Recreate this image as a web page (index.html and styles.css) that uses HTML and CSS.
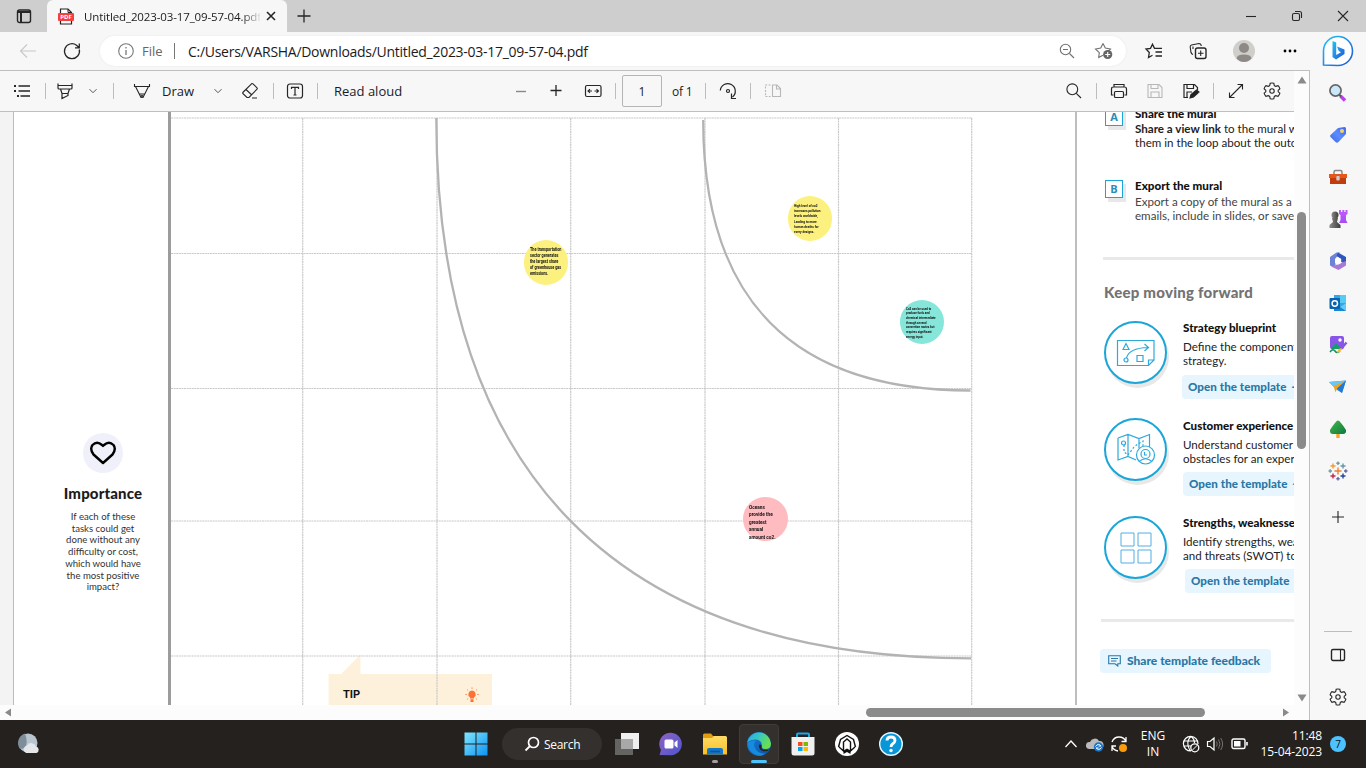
FILE: index.html
```html
<!DOCTYPE html>
<html lang="en">
<head>
<meta charset="utf-8">
<title>Untitled_2023-03-17_09-57-04.pdf</title>
<link rel="stylesheet" href="styles.css">
</head>
<body>
<svg width="0" height="0" class="defs">
  <defs>
    <linearGradient id="bing" x1="0" y1="0" x2="1" y2="1"><stop offset="0" stop-color="#25c1f5"/><stop offset="1" stop-color="#2257d6"/></linearGradient>
    <linearGradient id="tag" x1="1" y1="0" x2="0" y2="1"><stop offset="0" stop-color="#4a63e8"/><stop offset=".5" stop-color="#5a8cff"/><stop offset="1" stop-color="#4665e0"/></linearGradient>
    <linearGradient id="violet" x1="0" y1="0" x2="0" y2="1"><stop offset="0" stop-color="#c05cff"/><stop offset="1" stop-color="#a64bf4"/></linearGradient>
    <linearGradient id="pawn" x1="0" y1="0" x2="1" y2="0"><stop offset="0" stop-color="#8a8a8a"/><stop offset="1" stop-color="#3c3c3c"/></linearGradient>
    <linearGradient id="win" x1="0" y1="0" x2="1" y2="1"><stop offset="0" stop-color="#7fe6fd"/><stop offset="1" stop-color="#0d92f4"/></linearGradient>
    <linearGradient id="folder" x1="0" y1="0" x2="0" y2="1"><stop offset="0" stop-color="#ffdc68"/><stop offset="1" stop-color="#fbbe20"/></linearGradient>
    <linearGradient id="chat" x1="0" y1="0" x2="1" y2="1"><stop offset="0" stop-color="#9163c0"/><stop offset="1" stop-color="#4a55cf"/></linearGradient>
    <linearGradient id="edgeTop" x1="0" y1="0" x2="1" y2=".4"><stop offset="0" stop-color="#2ba7e4"/><stop offset=".5" stop-color="#38c7c3"/><stop offset="1" stop-color="#69e04b"/></linearGradient>
    <linearGradient id="edgeLow" x1="0" y1="0" x2="1" y2="1"><stop offset="0" stop-color="#1784dc"/><stop offset="1" stop-color="#0c4fa0"/></linearGradient>
    <linearGradient id="tree" x1="0" y1="0" x2="1" y2="1"><stop offset="0" stop-color="#45b649"/><stop offset="1" stop-color="#0d7a3e"/></linearGradient>
    <symbol id="gear" viewBox="0 0 20 20"><path d="M8.2 2.2Q10 1.7 11.8 2.2L12.3 4.6 13.7 5.4 16.1 4.7Q17.4 6 17.9 7.9L16.2 9.2V10.8L17.9 12.2Q17.4 14 16.1 15.3L13.7 14.6 12.3 15.4 11.8 17.8Q10 18.3 8.2 17.8L7.7 15.4 6.3 14.6 3.9 15.3Q2.6 14 2.1 12.2L3.8 10.8V9.2L2.1 7.9Q2.6 6 3.9 4.7L6.3 5.4 7.7 4.6Z"/><circle cx="10" cy="10" r="2.2"/></symbol>
    <symbol id="chev" viewBox="0 0 12 12"><path d="M2.5 4.2 6 7.7 9.5 4.2"/></symbol>
    <symbol id="lens" viewBox="0 0 20 20"><circle cx="8.3" cy="8.3" r="5.4"/><path d="M12.3 12.3 17 17"/></symbol>
  </defs>
</svg>

<header class="tabstrip">
  <svg class="line tab-actions" width="16" height="16" viewBox="0 0 16 16"><rect x="1.5" y="2" width="13" height="12.5" rx="2" stroke-width="1.4"/><path d="M1.5 4H14.5M5 5V14" stroke-width="2"/></svg>
  <div class="tab">
    <svg width="16" height="17" viewBox="0 0 16 17"><path d="M2.5 1H10L13.5 4.500V16H2.500Z" fill="#fff" stroke="#222" stroke-width="1.2"/><path d="M10 1V4.500H13.500" fill="none" stroke="#222"/><rect x="0" y="5" width="16" height="8" rx="1" fill="#f5403c"/><text x="8" y="11.200" class="pdf-mark">PDF</text></svg>
    <span class="tab-title">Untitled_2023-03-17_09-57-04.pdf</span>
    <svg class="line" width="12" height="12" viewBox="0 0 12 12"><path d="M2 2 10 10M10 2 2 10" stroke-width="1.6"/></svg>
  </div>
  <svg class="line new-tab" width="16" height="16" viewBox="0 0 16 16"><path d="M8 1.500V14.500M1.500 8H14.500" stroke-width="1.300"/></svg>
  <div class="window-buttons">
    <svg class="line" width="12" height="12" viewBox="0 0 12 12"><path d="M1 6.500H11"/></svg>
    <svg class="line" width="12" height="12" viewBox="0 0 12 12"><rect x="1.500" y="3.500" width="7" height="7" rx="1.500"/><path d="M4 1.500H8.500Q10.500 1.500 10.500 3.500V8"/></svg>
    <svg class="line" width="12" height="12" viewBox="0 0 12 12"><path d="M1 1 11 11M11 1 1 11"/></svg>
  </div>
</header>

<div class="workspace">
  <main class="browser">
    <nav class="address-row">
      <svg class="line back" width="32" height="32" viewBox="0 0 32 32"><path d="M24 16H8.500M15 9.500 8.500 16 15 22.500"/></svg>
      <svg class="line ml-12" width="32" height="32" viewBox="0 0 32 32"><path d="M23.300 14.500A7.500 7.500 0 1 1 20.500 10.200L23 12.500M23.300 8.500V12.800H19" stroke-width="1.300"/></svg>
      <div class="address ml-12">
        <svg class="line info" width="16" height="16" viewBox="0 0 16 16"><circle cx="8" cy="8" r="7.300"/><path d="M8 7V12M8 4V5.500" stroke-width="1.300"/></svg>
        <span class="scheme">File</span><i class="address-sep"></i>
        <span class="url">C:/Users/VARSHA/Downloads/Untitled_2023-03-17_09-57-04.pdf</span>
        <svg class="line grey" width="16" height="16" viewBox="0 0 16 16"><circle cx="6.500" cy="6.500" r="5.200"/><path d="M4 6.500H9M10.500 10.500 15 15"/></svg>
        <svg class="line grey fav-add" width="20" height="18" viewBox="0 0 20 18"><path d="M9 1.500 11.300 6 16.500 7 13 10.500M9 13.300 4.700 15.500 5.300 10.600 1.500 7 6.700 6 9 1.500"/><circle cx="13.700" cy="12.500" r="4.600" fill="#666" stroke="none"/><path d="M13.700 10V15M11.200 12.500H16.200" stroke="#fff"/></svg>
      </div>
      <svg class="line ml-12" width="32" height="32" viewBox="0 0 32 32"><path d="M16 12.500 14.500 9.200 12.500 13.400 8 14 11.300 17.500 10.500 22.500 14.500 20.300M14.500 9.200 16.500 13.300H24M17.500 17H24M17.500 21H24" stroke-width="1.300"/></svg>
      <svg class="line ml-12" width="32" height="32" viewBox="0 0 32 32"><path d="M11 19.500Q9.500 19 9 17.500L8.200 12Q8 10.500 9.500 10L17 8.500Q19 8.500 19.300 11"/><path d="M11 14V11.500"/><rect x="13.500" y="13" width="10.500" height="10.500" rx="2" stroke-width="1.400"/><path d="M18.700 15.500V21M16 18.300H21.500"/></svg>
      <svg class="ml-14" width="32" height="32" viewBox="0 0 32 32"><circle cx="16" cy="16" r="11" fill="#d0ceca"/><circle cx="16" cy="13" r="5" fill="#8d8986"/><path d="M8.500 23.500Q9 19.500 16 19.500T23.500 23.500Q20 27 16 27T8.500 23.500" fill="#8d8986"/></svg>
      <svg class="ml-14" width="32" height="32" viewBox="0 0 32 32"><circle cx="11" cy="16" r="1.400"/><circle cx="16" cy="16" r="1.400"/><circle cx="21" cy="16" r="1.400"/></svg>
    </nav>

    <div class="reader">
      <div class="reader-main">
        <div class="pdfbar">
          <svg class="line" width="20" height="20" viewBox="0 0 20 20"><path d="M6.500 5H18M6.500 10H18M8.500 15H18" stroke-width="1.300"/><path d="M2 5H4M2 10H4M5 15H7" stroke-width="2"/></svg>
          <i class="sep ml-13"></i>
          <svg class="line ml-9" width="20" height="20" viewBox="0 0 20 20"><path d="M3 2.500V7Q3 8 4 8H16Q17 8 17 7V2.500M3.500 4.500H16.500M5.500 8 7 12.500H13L14.500 8M7 12.500V17.500L13 14.500V12.500" stroke-width="1.200"/></svg>
          <svg class="line chev ml-12" width="12" height="12"><use href="#chev"/></svg>
          <i class="sep ml-14"></i>
          <svg class="line ml-18" width="20" height="20" viewBox="0 0 20 20"><path d="M2.500 3V5.500H17.500V3M3.500 5.500 9 16.500H11L16.500 5.500M7.500 13H12.500" stroke-width="1.100"/><path d="M8.500 14H11.500L10.500 17H9.500Z" fill="#444" stroke="none"/></svg>
          <span class="draw ml-10">Draw</span>
          <svg class="line chev ml-10" width="12" height="12"><use href="#chev"/></svg>
          <svg class="line ml-16" width="20" height="20" viewBox="0 0 20 20"><path d="M2.800 11.500 11.500 2.800Q12.300 2.200 13 2.800L17 6.800Q17.600 7.500 17 8.200L9 16.500H7L2.800 12.500ZM6 8.500 11.800 14M12 17H17" stroke-width="1.100"/></svg>
          <i class="sep ml-13"></i>
          <svg class="line ml-11" width="20" height="20" viewBox="0 0 20 20"><rect x="2.500" y="3" width="15" height="14" rx="2.500" stroke-width="1.200"/><path d="M6.500 8V6.300H13.500V8M10 6.300V14M8.500 14H11.500" stroke-width="1.200"/></svg>
          <i class="sep ml-12"></i>
          <span class="read ml-16">Read aloud</span>
          <svg class="line minus" width="20" height="20" viewBox="0 0 20 20"><path d="M5 10.500H15" stroke-width="1.400" stroke="#888"/></svg>
          <svg class="line ml-15" width="20" height="20" viewBox="0 0 20 20"><path d="M4.500 9.500H15.500M10 4V15" stroke-width="1.300"/></svg>
          <svg class="line ml-17" width="20" height="20" viewBox="0 0 20 20"><rect x="2.500" y="4.500" width="15.500" height="11" rx="1.500" stroke-width="1.200"/><path d="M5 10H9M11.500 10H15.500M7 8.200 5 10 7 11.800M13.500 8.200 15.500 10 13.500 11.800"/></svg>
          <i class="sep ml-12"></i>
          <span class="page-input">1</span>
          <span class="of ml-10">of 1</span>
          <i class="sep ml-11"></i>
          <svg class="line ml-12" width="20" height="20" viewBox="0 0 20 20"><path d="M2.300 9.500A7.500 7.500 0 1 1 14.500 16M13.500 12.500V17.500H18" stroke-width="1.200"/><circle cx="10" cy="10" r="1.500" stroke-width="1.200"/></svg>
          <i class="sep ml-12"></i>
          <svg class="line pale ml-12" width="20" height="20" viewBox="0 0 20 20"><path d="M9.500 4H14L17.500 7.500V15.500H9.500ZM13.500 4V8H17.500"/><path d="M7.500 4H2.500V15.500H7.500" stroke-dasharray="2 1.300"/></svg>
          <svg class="line find" width="20" height="20"><use href="#lens"/></svg>
          <i class="sep ml-12"></i>
          <svg class="line ml-12" width="20" height="20" viewBox="0 0 20 20"><path d="M5 6V3.500H15V6M4.500 14H2.500V8Q2.500 6 4.500 6H15.500Q17.500 6 17.500 8V14H15.500" stroke-width="1.200"/><rect x="5.500" y="10.500" width="9" height="6" rx="1" stroke-width="1.200"/></svg>
          <svg class="line pale ml-16" width="20" height="20" viewBox="0 0 20 20"><path d="M3 3.500H14L17 6.500V16.500H3ZM6 3.500V7.500H13V3.500M6 16.500V11H14V16.500"/></svg>
          <svg class="line ml-16" width="20" height="20" viewBox="0 0 20 20"><path d="M7 16.500H3V3.500H13.500L16.500 6.500V9M6 3.500V7.500H12.500V3.500M6 16.500V11H11" stroke-width="1.200"/><path d="M9 17 10 13.500 15.500 9 18 11 12.500 16Z" fill="#222"/></svg>
          <i class="sep ml-12"></i>
          <svg class="line ml-12" width="20" height="20" viewBox="0 0 20 20"><path d="M3.500 16.500 16.500 3.500M11.500 3.500H16.500V8.500M3.500 11.500V16.500H8.500"/></svg>
          <svg class="line ml-16" width="20" height="20"><use href="#gear"/></svg>
        </div>

        <div class="viewport">
          <section class="importance">
            <div class="heart"><svg width="28" height="26" viewBox="0 0 28 26"><path d="M14 23 4.500 14.500Q.5 9 3.500 5 8 .5 13 5L14 6 15 5Q20 .5 24.500 5 27.500 9 23.500 14.500Z" fill="none" stroke="#000" stroke-width="2.400" stroke-linejoin="round"/></svg></div>
            <h2>Importance</h2>
            <p>If each of these<br>tasks could get<br>done without any<br>difficulty or cost,<br>which would have<br>the most positive<br>impact?</p>
          </section>
          <section class="board">
            <svg class="board-lines" width="904" height="593" viewBox="171 112 904 593">
              <path d="M328.500 674H492V705H328.500ZM340.500 674.500 360.500 654.500V674.500Z" fill="#fdf1db"/>
              <g class="dashes"><path d="M171 118H972M171 253.500H972M171 388.500H972M171 521H972M171 656H972M302.700 118V705M437 118V705M570.700 118V705M705 118V705M838.500 118V705M971.700 118V705"/></g>
              <g class="arcs"><path d="M436.300 118C436.300 472 616 658.300 971 658.300M703.200 120C703.200 299 792 390.500 970.500 390.500"/></g>
            </svg>
            <div class="note yellow n1"><p>The transportation<br>sector generates<br>the largest share<br>of greenhouse gas<br>emissions.</p></div>
            <div class="note yellow n2"><p>High level of co2<br>increases pollution<br>levels worldwide,<br>Leading to more<br>human deaths for<br>every designs.</p></div>
            <div class="note teal n3"><p>Co2 can be used to<br>produce fuels and<br>chemical intermediate<br>through several<br>convertion routes but<br>requires significant<br>energy input.</p></div>
            <div class="note pink n4"><p>Oceans<br>provide the<br>greatest<br>annual<br>amount co2.</p></div>
            <div class="tip"><b>TIP</b><svg width="14" height="16" viewBox="0 0 14 16"><path d="M7 3.500A3.700 3.700 0 0 1 9 10.300V11.500H5V10.300A3.700 3.700 0 0 1 7 3.500M5.500 12.300H8.500V15H5.500Z" fill="#ff7033"/><path d="M7 .3V2M2 2.500 3.200 3.500M12 2.500 10.800 3.500M.2 7.500H2M12 7.500H13.800M2 12.500 3.200 11.500M12 12.500 10.800 11.500" stroke="#ff9a66"/></svg></div>
          </section>
          <aside class="guide">
            <div class="step first"><i class="letter">A</i><div><h3>Share the mural</h3><p class="dark"><b>Share a view link</b> to the mural with<br>them in the loop about the outcomes</p></div></div>
            <div class="step"><i class="letter">B</i><div><h3>Export the mural</h3><p>Export a copy of the mural as a PDF<br>emails, include in slides, or save it</p></div></div>
            <hr>
            <h2>Keep moving forward</h2>
            <div class="template t1"><span class="disc"><svg width="40" height="30" viewBox="0 0 40 30"><path d="M1.500 2.500H38V22L32.500 27.500H1.500ZM32.500 27.500V22H38M7 11.500 10 5.500 13 11.500ZM10.500 20Q13 10 32 9.500M28.500 6 32.500 9.500 28.500 13M21 17.500H27V23.500H21Z"/><circle cx="10" cy="22" r="2"/></svg></span>
              <div><h3>Strategy blueprint</h3><p>Define the components of a<br>strategy.</p><a>Open the template<span>→</span></a></div></div>
            <div class="template t2"><span class="disc"><svg width="40" height="34" viewBox="0 0 40 34"><path d="M2 6 12 2.500 23 6.500 33.500 2.500V16M2 6V28L12 24.500 20 28M12 2.500V24.500M23 6.500V16"/><path d="M8 13V20L12 23 18 15 22 12 27 9V15" stroke-dasharray="2 2"/><circle cx="7.500" cy="11" r="2"/><circle cx="29.500" cy="23" r="9" fill="#fff"/><circle cx="29.500" cy="22" r="4.500"/><path d="M23 29.500Q29.500 24 36 29.500M28.500 20V23H31"/></svg></span>
              <div><h3>Customer experience map</h3><p>Understand customer needs and<br>obstacles for an experience</p><a>Open the template<span>→</span></a></div></div>
            <div class="template t3"><span class="disc"><svg class="swot" width="32" height="32" viewBox="0 0 32 32"><path d="M1 1H14V14H1ZM18 1H31V14H18ZM1 18H14V31H1ZM18 18H31V31H18Z"/></svg></span>
              <div><h3>Strengths, weaknesses</h3><p>Identify strengths, weaknesses<br>and threats (SWOT) to develop</p><a>Open the template<span>→</span></a></div></div>
            <hr class="last">
            <a class="feedback"><svg width="13" height="12" viewBox="0 0 13 12"><path d="M.7.700H12.300V8.800H9.800V11L7 8.800H.700ZM3 3.500H10M3 6H8.500" fill="none" stroke="#2a78a4" stroke-width="1.100"/></svg>Share template feedback</a>
          </aside>
        </div>
        <div class="hscroll"><svg width="8" height="9" viewBox="0 0 8 9"><path d="M7 .5V8.500L1 4.500Z"/></svg><i></i><svg width="8" height="9" viewBox="0 0 8 9"><path d="M1 .5V8.500L7 4.500Z"/></svg></div>
      </div>
      <div class="vscroll"><svg width="10" height="8" viewBox="0 0 10 8"><path d="M5 .5 9.500 7.500H.5Z"/></svg><i></i><svg class="down" width="10" height="8" viewBox="0 0 10 8"><path d="M.5.500H9.500L5 7.500Z"/></svg></div>
    </div>
  </main>

  <aside class="sidebar">
    <svg class="bing" width="32" height="34" viewBox="0 0 32 34"><path d="M1.500 31V17A14.500 14.500 0 1 1 16 31.500Z" fill="#fff" stroke="url(#bing)" stroke-width="1.600"/><path d="M10.500 7 14.200 8.500V21L19 18.300 16.800 17 15 12.500 22.500 15.500V20L14 25.500 10.500 23Z" fill="url(#bing)"/></svg>
    <span><svg width="20" height="20" viewBox="0 0 20 20"><path d="M12.500 13 17 17.500" stroke="#bf3df0" stroke-width="3.400"/><path d="M10.500 11 13 13.500" stroke="#555" stroke-width="2"/><circle cx="7.500" cy="7.500" r="5.600" fill="#c9e9fb" stroke="#666" stroke-width="1.700"/></svg></span>
    <span><svg width="20" height="20" viewBox="0 0 20 20"><path d="M10 3 16.500 2Q18 2 18 3.500V9L10.500 17Q9 18.500 7.500 17L2.500 12Q1.500 11 2.500 10Z" fill="url(#tag)"/><circle cx="14" cy="6" r="2" fill="#f6d65a"/></svg></span>
    <span><svg width="20" height="20" viewBox="0 0 20 20"><path d="M6 7V5Q6 3.500 7.500 3.500H12.500Q14 3.500 14 5V7" fill="none" stroke="#888" stroke-width="1.500"/><path d="M1 7H19V11H1Z" fill="#e6571b"/><path d="M2 11H18V17H2Z" fill="#c23c0c"/><rect x="8.300" y="9" width="3.400" height="4.500" rx="1" fill="#ccc"/></svg></span>
    <span><svg width="20" height="20" viewBox="0 0 20 20"><path d="M11 1H13V3H14.300V1H16.300V3H17.500V1H19.500V5L18 6V11L19.500 14H11L12.500 11V6L11 5Z" fill="url(#violet)"/><circle cx="7" cy="6" r="3.500" fill="url(#pawn)"/><path d="M4 9H10L9 13 12.500 16V19H1.500V16L5 13Z" fill="url(#pawn)"/></svg></span>
    <span><svg width="20" height="20" viewBox="0 0 20 20"><path d="M2 6 8.500 1.500H12L7.500 7.500V14L5.500 16 2 14.500Z" fill="#6c84d6"/><path d="M10 1.500 18 6V12.500L13 11V8L8.500 5Z" fill="#3055bd"/><path d="M18 10V14.500L10.500 19 3 15.500 8 14 13 12Z" fill="#a77bd5"/><path d="M7 8 10 6.200 13.200 8V12L10 13.800 7 12Z" fill="#fff"/></svg></span>
    <span><svg width="20" height="20" viewBox="0 0 20 20"><path d="M6 2H18V18H6Z" fill="#35a7e6"/><path d="M12 2H18V10H12Z" fill="#58cbf5"/><path d="M6 11 12 14 18 10V18H6Z" fill="#1687d4"/><path d="M18 10 12 14 18 18Z" fill="#64ccf4"/><rect x="1.500" y="5" width="10.500" height="11" rx="1" fill="#0864b1"/><circle cx="6.800" cy="10.500" r="2.700" fill="none" stroke="#fff" stroke-width="1.500"/></svg></span>
    <span><svg width="20" height="20" viewBox="0 0 20 20"><rect x="2" y="1" width="14" height="13" rx="2" fill="#8955e8"/><path d="M3 13 8 8 14 14H3Z" fill="#179d69"/><circle cx="12" cy="5" r="1.700" fill="#fff"/><path d="M2 17Q5 13 7 16T12 16" fill="none" stroke="#128c60" stroke-width="1.500"/><path d="M18.500 7.500 13 14" stroke="#8955e8" stroke-width="2.400"/><path d="M14 13 12 17 9 18 10.500 14Z" fill="#f7ba28"/></svg></span>
    <span><svg width="20" height="20" viewBox="0 0 20 20"><path d="M1 5 18 3.500 14 16 9 13Z" fill="#2f9bee"/><path d="M1 5 18 3.500 7 10.500Z" fill="#69c6f7"/><path d="M5.500 9 18 4 9 11.500 7.500 15.500Z" fill="#eda526"/><path d="M9 11.500 14 16 18 3.500Z" fill="#2378d3"/></svg></span>
    <span><svg width="20" height="20" viewBox="0 0 20 20"><path d="M8.300 13H11.700V19H8.300Z" fill="#f6a526"/><path d="M10 1.500Q12 1.500 18 11 18.500 15 15 15H5Q1.500 15 2 11 8 1.500 10 1.500" fill="url(#tree)"/></svg></span>
    <span><svg width="20" height="20" viewBox="0 0 20 20" fill="none" stroke-width="1.400"><path d="M10 6.500V13.500M6.500 10H13.500" stroke="#eb7e34"/><path d="M5 2.500V7.500M2.500 5H7.500" stroke="#ee9b39"/><path d="M15 2.500V7.500M12.500 5H17.500" stroke="#5f9aa5"/><path d="M5 12.500V17.500M2.500 15H7.500" stroke="#c7254b"/><path d="M15 12.500V17.500M12.500 15H17.500" stroke="#24478e"/><path d="M10 .5V4M8.300 2.200H11.700M2.200 8.300V11.700M.5 10H4" stroke="#7199a6"/><path d="M10 16V19.500M8.300 17.800H11.700M17.800 8.300V11.700M16 10H19.500" stroke="#6567a9"/></svg></span>
    <span class="plus"><svg class="line" width="14" height="14" viewBox="0 0 14 14"><path d="M7 1V13M1 7H13"/></svg></span>
    <i></i>
    <span class="panel"><svg class="line" width="16" height="16" viewBox="0 0 16 16"><rect x="1.500" y="2.500" width="13" height="11" rx="1.500" stroke-width="1.400"/><path d="M10.500 2.500V13.500"/></svg></span>
    <span class="sidegear"><svg class="line" width="20" height="20"><use href="#gear"/></svg></span>
  </aside>
</div>

<footer class="taskbar">
  <div class="weather"><svg width="24" height="24" viewBox="0 0 24 24"><circle cx="11" cy="11" r="9.500" fill="#b8c4ce"/><path d="M8 1.500A10 10 0 0 0 3 17Q13 16 8 1.500" fill="#7d8d99"/><path d="M9 21A4 4 0 0 1 10 13.500 5 5 0 0 1 19 14.500 3.400 3.400 0 0 1 19.500 21Z" fill="#e4e7e9"/></svg></div>
  <div class="apps">
    <span><svg width="24" height="24" viewBox="0 0 24 24"><path d="M.5.500H11.500V11.500H.5ZM12.500.500H23.500V11.500H12.500ZM.5 12.500H11.500V23.500H.5ZM12.500 12.500H23.500V23.500H12.500Z" fill="url(#win)"/></svg></span>
    <div class="search"><svg width="16" height="16" viewBox="0 0 16 16"><circle cx="9.500" cy="6.500" r="5" fill="none" stroke="#fff" stroke-width="1.700"/><path d="M6 10 1.500 14.500" stroke="#fff" stroke-width="1.800"/></svg>Search</div>
    <span class="view"><svg width="24" height="24" viewBox="0 0 24 24"><rect x="6" y="1" width="18" height="16" fill="#efefef"/><rect x="0" y="7" width="18" height="16" fill="#707070" opacity=".85"/><rect x="6" y="7" width="12" height="10" fill="#a9a9a9"/></svg></span>
    <span><svg width="24" height="24" viewBox="0 0 24 24"><path d="M.5 23 2 18A11.300 11.300 0 1 1 12 23.300Z" fill="url(#chat)"/><rect x="5.500" y="7.500" width="9" height="9" rx="1.500" fill="#fff"/><path d="M15.500 10.500 18.500 8V16L15.500 13.500Z" fill="#fff"/></svg></span>
    <span class="folder"><svg width="24" height="24" viewBox="0 0 24 24"><path d="M0 3Q0 1.500 1.500 1.500H8L10 4H22V8H0Z" fill="#e39c10"/><path d="M0 6H9L11 4H22.500Q24 4 24 5.500V22.500H0Z" fill="url(#folder)"/><path d="M4 22.500V18Q4 16 6 16H18Q20 16 20 18V22.500Z" fill="#1376c9"/><path d="M7 19.500H17" stroke="#0a569c" stroke-width="1.500"/></svg><i></i></span>
    <span class="edge"><svg width="24" height="24" viewBox="0 0 24 24"><circle cx="12" cy="12" r="12" fill="url(#edgeLow)"/><path d="M.3 10A12 12 0 0 1 24 11.500Q24 17 18.500 17 14 17 14.800 13.500 15 8.500 9.500 7.500 4 7 .3 10" fill="url(#edgeTop)"/><path d="M9 8.500Q5.500 12 8.500 17T18.500 21.500Q13 25.500 7 22T1 11Q4 8 9 8.500" fill="#178be0"/><path d="M14.800 13.500Q13 18 18.500 18 22 18 23.200 16.500 20.500 20 16.500 19.200 12 18 12 14 12 11.500 14.800 13.500" fill="#25211f"/></svg><i></i></span>
    <span class="store"><svg width="24" height="24" viewBox="0 0 24 24"><path d="M6 6V2.500Q6 1.500 7 1.500H17Q18 1.500 18 2.500V6" fill="none" stroke="#1aa7e8" stroke-width="2"/><path d="M.5 5H23.500V21Q23.500 23.500 21 23.500H3Q.5 23.500 .5 21Z" fill="#f0f0f0"/><path d="M7 10H11.500V14H7Z" fill="#f25022"/><path d="M12.500 10H17V14H12.500Z" fill="#7fba00"/><path d="M7 15H11.500V19H7Z" fill="#00a4ef"/><path d="M12.500 15H17V19H12.500Z" fill="#ffb900"/></svg></span>
    <span class="mcafee"><svg width="24" height="24" viewBox="0 0 24 24"><circle cx="12" cy="12" r="12" fill="#fff"/><path d="M3.500 15 5.500 7.500 12 3.500 18.500 7.500 20.500 15M4 15 8.500 19V10L12 7 15.500 10V19L20 15" fill="none" stroke="#111" stroke-width="1.400"/><path d="M8.500 22V18.500L12 16.500 15.500 18.500V22L12 20Z" fill="#111"/></svg></span>
    <span><svg width="24" height="24" viewBox="0 0 24 24"><circle cx="12" cy="12" r="11.300" fill="#0796d8" stroke="#e8f7ff" stroke-width="1.400"/><path d="M8 8.500Q8 5 12 5T16 8.500Q16 10.500 13.500 12 12 13 12 15" fill="none" stroke="#fff" stroke-width="2.800"/><circle cx="12" cy="18.500" r="1.700" fill="#fff"/></svg></span>
  </div>
  <div class="tray">
    <svg class="light" width="14" height="14" viewBox="0 0 14 14"><path d="M1.500 10 7 4 12.500 10" stroke-width="1.300"/></svg>
    <svg class="cloud" width="18" height="18" viewBox="0 0 18 18"><path d="M3 14A3.500 3.500 0 0 1 4 7 5 5 0 0 1 13 6 4 4 0 0 1 14 14Z" fill="#bbb"/><circle cx="12.500" cy="12" r="4.700" fill="#1976c8"/><path d="M9.500 11.500Q12.500 7.500 15 11H12.500M15.500 12.500Q13 16 10 13H12.500" fill="none" stroke="#fff"/></svg>
    <svg class="light sync" width="18" height="18" viewBox="0 0 18 18"><path d="M2 7Q4 2 9 2T16 6.500M16 2V6.500H11.500M2 16V11H6M2 11Q3 15 8 16" stroke-width="1.300"/><circle cx="13" cy="13" r="4" fill="#f99b0c" stroke="none"/></svg>
    <span class="lang">ENG<br>IN</span>
    <svg class="light globe" width="18" height="18" viewBox="0 0 18 18"><path d="M9 16A7.300 7.300 0 1 1 16 9M2 6H16M1.500 11H9M9 1.500Q5 5 6 10T9 16M9 1.500Q12.500 4 12.500 8" stroke-width="1.200"/><circle cx="12.800" cy="12.800" r="4" stroke-width="1.300"/><path d="M10 15.500 15.500 10"/></svg>
    <svg class="light sound" width="18" height="18" viewBox="0 0 18 18"><path d="M1.500 6.500H4L8 3V15L4 11.500H1.500Z" stroke-width="1.200"/><g stroke="#77716e"><path d="M10.500 6.500Q12 9 10.500 11.500M12.500 4.500Q15.500 9 12.500 13.500M14.700 3Q18.500 9 14.700 15"/></g></svg>
    <svg class="light battery" width="18" height="12" viewBox="0 0 18 12"><rect x="1" y="1" width="13" height="9.500" rx="1.500" stroke-width="1.400"/><rect x="3" y="3" width="6.500" height="5.500" fill="#fff" stroke="none"/><path d="M16 4V7.500" stroke-width="1.600"/></svg>
    <span class="clock">11:48<br>15-04-2023</span>
    <b>7</b>
  </div>
</footer>
</body>
</html>
```

FILE: styles.css
```css
* { box-sizing: border-box; }
body { margin: 0; width: 1366px; height: 768px; overflow: hidden; display: flex; flex-direction: column; background: #f7f7f7; color: #1b1b1b; font-family: "Open Sans", "Noto Sans", sans-serif; }
svg { display: block; flex: none; }
.defs { position: absolute; }
h2, h3, p { margin: 0; }
i { font-style: normal; }
.line { fill: none; stroke: #262626; stroke-width: 1.1; }
.grey { stroke: #707070; }
.pale { stroke: #b8b8b8; }
.chev { stroke: #555; stroke-width: 1; }
.ml-9 { margin-left: 9px; }
.ml-10 { margin-left: 10px; }
.ml-11 { margin-left: 11px; }
.ml-12 { margin-left: 12px; }
.ml-13 { margin-left: 13px; }
.ml-14 { margin-left: 14px; }
.ml-15 { margin-left: 15px; }
.ml-16 { margin-left: 16px; }
.ml-17 { margin-left: 17px; }
.ml-18 { margin-left: 18px; }

/* Tab strip */
.tabstrip { height: 32px; flex: none; display: flex; align-items: center; background: #cecece; }
.tab-actions { margin-left: 16px; }
.tab { margin-left: 15px; width: 240px; height: 32px; border-radius: 6px 6px 0 0; background: #f7f7f7; display: flex; align-items: center; padding-left: 11px; }
.pdf-mark { font: bold 6px "Open Sans", sans-serif; fill: #fff; text-anchor: middle; }
.tab-title { margin-left: 10px; width: 176px; margin-right: 5px; overflow: hidden; white-space: nowrap; font-size: 11.5px; letter-spacing: -.12px; -webkit-mask-image: linear-gradient(90deg, #000 158px, transparent 178px); }
.new-tab { margin-left: 9px; }
.window-buttons { margin-left: auto; display: flex; gap: 34px; padding-right: 17px; }

.workspace { flex: 1; min-height: 0; display: flex; }
.browser { width: 1310px; flex: none; display: flex; flex-direction: column; }

/* Address row */
.address-row { height: 38px; flex: none; display: flex; align-items: center; padding-left: 12px; }
.back { stroke: #c8c8c8; }
.address { width: 1026px; height: 30px; border-radius: 15px; background: #fff; display: flex; align-items: center; box-shadow: 0 0 2px #e4e4e4; font-size: 13px; white-space: nowrap; }
.info { margin-left: 18px; stroke: #777; }
.scheme { margin-left: 8px; width: 32px; color: #666; }
.address-sep { width: 1px; height: 16px; background: #777; margin-right: 13px; }
.url { width: 871px; font-size: 14px; letter-spacing: -.28px; }
.fav-add { margin-left: 19px; }

/* Reader */
.reader { flex: 1; min-height: 0; display: flex; border-top: 1px solid #bfbfbf; border-right: 1px solid #bfbfbf; background: #fcfcfc; }
.reader-main { width: 1294px; flex: none; display: flex; flex-direction: column; }
.pdfbar { height: 41px; flex: none; border-bottom: 1px solid #bfbfbf; background: #f7f7f7; display: flex; align-items: center; padding-left: 12px; font-size: 13px; white-space: nowrap; }
.sep { width: 1px; height: 16px; background: #bdbdbd; flex: none; }
.draw { width: 40px; }
.read { width: 80px; }
.minus { margin-left: 97px; }
.page-input { margin-left: 6px; width: 40px; height: 32px; border: 1px solid #b5b5b5; border-radius: 2px; text-align: center; line-height: 31px; font-size: 12px; }
.of { width: 22px; font-size: 12px; letter-spacing: -.2px; }
.find { margin-left: 281px; }
.viewport { height: 593px; flex: none; overflow: hidden; display: flex; background: #fff; border-left: 13px solid #f3f3f3; font-family: "Lato", sans-serif; }
.hscroll { height: 15px; display: flex; align-items: center; padding-left: 4px; fill: #8a8a8a; }
.hscroll i { width: 339px; height: 9px; border-radius: 5px; background: #8b8b8b; margin: 0 77px 0 854px; }
.vscroll { width: 15px; display: flex; flex-direction: column; align-items: center; padding-top: 5px; fill: #8a8a8a; }
.vscroll i { width: 9px; height: 237px; border-radius: 5px; background: #8b8b8b; margin-top: 128px; }
.down { margin-top: 245px; }

/* Criteria column */
.importance { width: 158px; flex: none; border-left: 1px solid #bdbdbd; border-right: 3px solid #9c9c9c; padding: 321px 0 0 24px; display: flex; flex-direction: column; align-items: center; text-align: center; }
.heart { width: 40px; height: 40px; border-radius: 50%; background: #f0f0fa; display: grid; place-items: center; }
.importance h2 { margin-top: 10px; font-size: 15px; line-height: 20px; font-weight: 900; letter-spacing: .15px; }
.importance p { margin-top: 8px; font-size: 9.6px; line-height: 11.7px; color: #333; white-space: nowrap; }

/* Prioritization board: notes are freely placed on the canvas */
.board { width: 904px; flex: none; position: relative; }
.dashes { fill: none; stroke: #c9c9c9; stroke-width: 1.2; stroke-dasharray: 2 .6; }
.arcs { fill: none; stroke: #b3b3b3; stroke-width: 2.3; }
.note { position: absolute; width: 44.5px; height: 44.5px; border-radius: 50%; color: #111; font-family: "Roboto", sans-serif; font-weight: 700; white-space: nowrap; }
.note p { transform-origin: 0 0; transform: scaleX(.8); }
.yellow { background: #fcf17f; }
.teal { background: #86e6d9; }
.pink { background: #ffbcc0; }
.n1 { left: 352.5px; top: 128px; padding: 7px 0 0 6.500px; font-size: 4.7px; line-height: 6px; }
.n2 { left: 616.500px; top: 84px; padding: 7px 0 0 6px; font-size: 3.9px; line-height: 5.2px; }
.n3 { left: 728.500px; top: 187.500px; padding: 7px 0 0 6px; font-size: 3.7px; line-height: 4.7px; }
.n4 { left: 572px; top: 384.500px; padding: 7px 0 0 6px; font-size: 5.9px; line-height: 7.5px; }
.tip { position: absolute; left: 172px; top: 574px; width: 136px; display: flex; justify-content: space-between; align-items: center; font: 11px/18px "Roboto", sans-serif; color: #111; }

/* Guide column */
.guide { width: 219px; flex: none; overflow: hidden; border-left: 2px solid #bdbdbd; white-space: nowrap; font-size: 11.6px; line-height: 14px; }
.step { display: flex; height: 72px; padding-left: 28px; color: #444; }
.step.first { margin-top: -5px; }
.step h3, .template h3 { font-size: 11.6px; line-height: 14px; font-weight: 900; color: #111; margin-bottom: 2px; }
.step.first h3 { margin-bottom: 1px; }
.dark { color: #222; }
.letter { width: 18px; height: 18px; margin: 1px 12px 0 0; border: 1.5px solid #1ba6d8; background: #fff; box-shadow: 3px 4px 0 #e8e8e8; text-align: center; font: 700 11px/15px "Open Sans", sans-serif; color: #2a8db4; flex: none; }
.guide hr { margin: 6px 0 0 26px; height: 3px; border: 0; background: #e9e9e9; }
.guide h2 { margin: 22px 0 0 27px; font-size: 15px; line-height: 20px; font-weight: 900; letter-spacing: .25px; color: #737373; }
.template { display: flex; height: 97.5px; padding-left: 27px; color: #222; }
.t1 { margin-top: 19px; }
.disc { width: 63px; height: 63px; margin: 0 16px 0 0; border: 2.5px solid #1ba6d8; border-radius: 50%; background: #fff; box-shadow: 2px 4px 0 #e8e8e8; display: grid; place-items: center; fill: none; stroke: #2caadb; stroke-width: 1.2; flex: none; }
.t2 .disc { margin-top: -1px; }
.swot { stroke: #52aee4; stroke-width: 1; }
.template h3 { margin-bottom: 5px; }
.template a { display: block; width: 130px; height: 24px; margin: 7px 0 0 -1px; padding-left: 6px; border-radius: 4px; background: #e7f5ff; color: #2a78a4; font-weight: 900; line-height: 23px; letter-spacing: .05px; }
.template a span { margin-left: 5px; }
.t2 a { margin: 6px 0 0; }
.t3 a { margin: 6px 0 0 2px; }
.guide .last { margin: 5.500px 0 0 24px; }
.feedback { display: flex; align-items: center; gap: 6px; width: 171px; height: 24px; margin: 27px 0 0 23px; padding-left: 8px; border-radius: 4px; background: #e7f5ff; color: #2a78a4; font-weight: 900; font-size: 12px; }

/* Edge sidebar */
.sidebar { width: 56px; display: flex; flex-direction: column; align-items: center; }
.bing { height: 40px; padding-bottom: 2px; flex: none; }
.sidebar span { height: 42px; display: grid; place-items: center; flex: none; }
.sidebar .plus { height: 50px; }
.sidebar i { width: 28px; height: 1px; background: #bdbdbd; margin-top: 89px; }
.sidebar .panel { margin-top: 2px; }

/* Taskbar */
.taskbar { height: 48px; flex: none; display: flex; align-items: center; background: #25211f; color: #fff; }
.weather { width: 456px; padding-left: 17px; }
.apps { width: 606px; display: flex; align-items: center; }
.apps span { width: 40px; height: 40px; display: grid; place-items: center; border-radius: 4px; margin-right: 4px; }
.apps > span:first-child { margin-right: 6px; }
.search { width: 100px; height: 32px; border-radius: 16px; background: #34302e; display: flex; align-items: center; padding-left: 22px; gap: 4px; font-size: 12px; letter-spacing: -.3px; }
.apps .view { margin-left: 5px; }
.apps .folder { position: relative; }
.folder i, .edge i { position: absolute; bottom: 1px; left: 17px; width: 6px; height: 3px; border-radius: 2px; background: #a3a09e; }
.apps .edge { background: #34302e; border: 1px solid #403c3a; position: relative; }
.edge i { left: 11px; width: 16px; bottom: 0; background: #4cc2ff; }
.tray { display: flex; align-items: center; padding-left: 2px; font-size: 12px; line-height: 16px; }
.light { fill: none; stroke: #fff; }
.cloud { margin-left: 8px; }
.sync { margin-left: 6px; }
.lang { width: 32px; margin-left: 9px; text-align: center; }
.globe { margin-left: 13px; }
.sound { margin-left: 6px; }
.battery { margin-left: 7px; }
.clock { width: 73px; text-align: right; letter-spacing: -.12px; }
.tray b { width: 16px; height: 16px; margin-left: 8px; border-radius: 50%; background: #4cc2ff; color: #111; font-weight: 400; font-size: 10px; text-align: center; }
```
